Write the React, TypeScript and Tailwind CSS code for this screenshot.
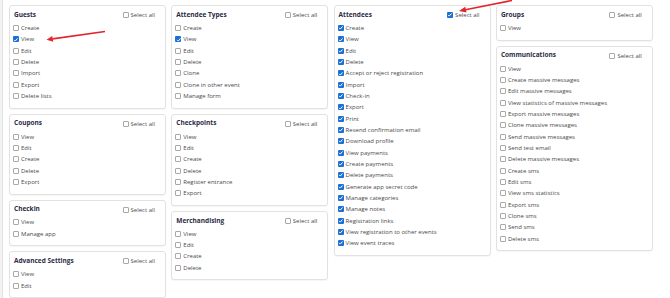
import React from "react";

type Section = {
  title: string;
  items: string[];
  checked?: string[];
  all?: boolean;
};

const columns: Section[][] = [
  [
    { title: "Guests", items: ["Create", "View", "Edit", "Delete", "Import", "Export", "Delete lists"], checked: ["View"] },
    { title: "Coupons", items: ["View", "Edit", "Create", "Delete", "Export"] },
    { title: "Checkin", items: ["View", "Manage app"] },
    { title: "Advanced Settings", items: ["View", "Edit"] },
  ],
  [
    {
      title: "Attendee Types",
      items: ["Create", "View", "Edit", "Delete", "Clone", "Clone in other event", "Manage form"],
      checked: ["View"],
    },
    { title: "Checkpoints", items: ["View", "Edit", "Create", "Delete", "Register entrance", "Export"] },
    { title: "Merchandising", items: ["View", "Edit", "Create", "Delete"] },
  ],
  [
    {
      title: "Attendees",
      all: true,
      items: [
        "Create",
        "View",
        "Edit",
        "Delete",
        "Accept or reject registration",
        "Import",
        "Check-in",
        "Export",
        "Print",
        "Resend confirmation email",
        "Download profile",
        "View payments",
        "Create payments",
        "Delete payments",
        "Generate app secret code",
        "Manage categories",
        "Manage notes",
        "Registration links",
        "View registration to other events",
        "View event traces",
      ],
    },
  ],
  [
    { title: "Groups", items: ["View"] },
    {
      title: "Communications",
      items: [
        "View",
        "Create massive messages",
        "Edit massive messages",
        "View statistics of massive messages",
        "Export massive messages",
        "Clone massive messages",
        "Send massive messages",
        "Send test email",
        "Delete massive messages",
        "Create sms",
        "Edit sms",
        "View sms statistics",
        "Export sms",
        "Clone sms",
        "Send sms",
        "Delete sms",
      ],
    },
  ],
];

function Box({ on }: { on: boolean }) {
  if (on) {
    return (
      <span className="flex h-[6px] w-[6px] shrink-0 items-center justify-center rounded-[1px] bg-[#1c6fd4]">
        <svg viewBox="0 0 10 10" className="h-[5.5px] w-[5.5px]">
          <path d="M2 5.2 L4.2 7.4 L8.2 2.6" fill="none" stroke="white" strokeWidth="1.8" />
        </svg>
      </span>
    );
  }
  return <span className="h-[6px] w-[6px] shrink-0 rounded-[1px] border border-[#a8a8a8] bg-white" />;
}

function Card({ section }: { section: Section }) {
  return (
    <div className="rounded-[3px] border border-[#e2e2e2] bg-white pb-[6px] pl-[3px] pr-[10px] pt-[4px] shadow-[0_1px_1px_rgba(0,0,0,0.04)]">
      <div className="mb-[2.3px] flex h-[10px] items-center justify-between">
        <span className="pl-[1px] text-[6.5px] font-bold text-[#2b2b44]">{section.title}</span>
        <label className="flex items-center gap-[2px] text-[6px] text-[#4a4a4a]">
          <Box on={!!section.all} />
          Select all
        </label>
      </div>
      {section.items.map((item) => (
        <div key={item} className="flex h-[11.33px] items-center gap-[2px] text-[6px] text-[#4a4a4a]">
          <Box on={!!section.all || !!section.checked?.includes(item)} />
          <span>{item}</span>
        </div>
      ))}
    </div>
  );
}

export default function App() {
  return (
    <div className="relative flex h-[298px] w-[670px] overflow-hidden bg-white font-['Open_Sans',sans-serif] leading-none">
      <div className="h-full w-[3px] border-r border-[#e0e0e0] bg-[#f3f3f3]" />
      <div className="flex items-start gap-[5.3px] pl-[6px] pt-[5px]">
        {columns.map((col, i) => (
          <div key={i} className="flex w-[157px] flex-col gap-[5px]">
            {col.map((s) => (
              <Card key={s.title} section={s} />
            ))}
          </div>
        ))}
      </div>

      <svg className="pointer-events-none absolute left-0 top-0" width="670" height="298">
        <line x1="105" y1="31.5" x2="52.5" y2="38.9" stroke="#e3262b" strokeWidth="1.6" />
        <polygon points="46.5,39.8 52.2,35.9 53.3,41.8" fill="#e3262b" />
        <line x1="512" y1="0.5" x2="465.5" y2="9.7" stroke="#e3262b" strokeWidth="1.6" />
        <polygon points="459,11 465.3,6.7 466.5,12.6" fill="#e3262b" />
      </svg>
    </div>
  );
}
